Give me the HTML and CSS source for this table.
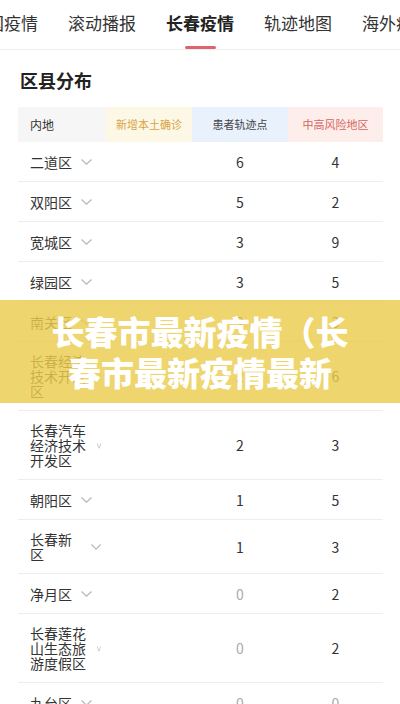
FILE: index.html
```html
<!DOCTYPE html>
<html lang="zh-CN">
<head>
<meta charset="utf-8">
<title>长春疫情</title>
<link rel="stylesheet" href="styles.css">
</head>
<body>
<div class="page">
  <nav class="tabs">
    <div class="tab-track">
      <span class="tab">全国疫情</span>
      <span class="tab">滚动播报</span>
      <span class="tab active">长春疫情</span>
      <span class="tab">轨迹地图</span>
      <span class="tab">海外疫情</span>
    </div>
  </nav>

  <section class="district">
    <h2 class="title">区县分布</h2>
    <div class="table">
      <div class="row head">
        <div class="cell name">内地</div>
        <div class="cell c-yellow">新增本土确诊</div>
        <div class="cell c-blue">患者轨迹点</div>
        <div class="cell c-pink">中高风险地区</div>
      </div>

      <div class="row">
        <div class="cell name"><span class="nm">二道区</span><svg class="chev" viewBox="0 0 10 6" preserveAspectRatio="none"><polyline points="0.5,0.5 5,5.2 9.5,0.5"/></svg></div>
        <div class="cell"></div><div class="cell">6</div><div class="cell">4</div>
      </div>
      <div class="row">
        <div class="cell name"><span class="nm">双阳区</span><svg class="chev" viewBox="0 0 10 6" preserveAspectRatio="none"><polyline points="0.5,0.5 5,5.2 9.5,0.5"/></svg></div>
        <div class="cell"></div><div class="cell">5</div><div class="cell">2</div>
      </div>
      <div class="row">
        <div class="cell name"><span class="nm">宽城区</span><svg class="chev" viewBox="0 0 10 6" preserveAspectRatio="none"><polyline points="0.5,0.5 5,5.2 9.5,0.5"/></svg></div>
        <div class="cell"></div><div class="cell">3</div><div class="cell">9</div>
      </div>
      <div class="row">
        <div class="cell name"><span class="nm">绿园区</span><svg class="chev" viewBox="0 0 10 6" preserveAspectRatio="none"><polyline points="0.5,0.5 5,5.2 9.5,0.5"/></svg></div>
        <div class="cell"></div><div class="cell">3</div><div class="cell">5</div>
      </div>
      <div class="row">
        <div class="cell name"><span class="nm">南关区</span><svg class="chev" viewBox="0 0 10 6" preserveAspectRatio="none"><polyline points="0.5,0.5 5,5.2 9.5,0.5"/></svg></div>
        <div class="cell"></div><div class="cell">2</div><div class="cell">3</div>
      </div>
      <div class="row">
        <div class="cell name"><span class="nm">长春经济技术开发区</span><svg class="chev" viewBox="0 0 10 6" preserveAspectRatio="none"><polyline points="0.5,0.5 5,5.2 9.5,0.5"/></svg></div>
        <div class="cell"></div><div class="cell">2</div><div class="cell">6</div>
      </div>
      <div class="row">
        <div class="cell name"><span class="nm">长春汽车经济技术开发区</span><svg class="chev" viewBox="0 0 10 6" preserveAspectRatio="none"><polyline points="0.5,0.5 5,5.2 9.5,0.5"/></svg></div>
        <div class="cell"></div><div class="cell">2</div><div class="cell">3</div>
      </div>
      <div class="row">
        <div class="cell name"><span class="nm">朝阳区</span><svg class="chev" viewBox="0 0 10 6" preserveAspectRatio="none"><polyline points="0.5,0.5 5,5.2 9.5,0.5"/></svg></div>
        <div class="cell"></div><div class="cell">1</div><div class="cell">5</div>
      </div>
      <div class="row">
        <div class="cell name"><span class="nm">长春新区</span><svg class="chev" viewBox="0 0 10 6" preserveAspectRatio="none"><polyline points="0.5,0.5 5,5.2 9.5,0.5"/></svg></div>
        <div class="cell"></div><div class="cell">1</div><div class="cell">3</div>
      </div>
      <div class="row">
        <div class="cell name"><span class="nm">净月区</span><svg class="chev" viewBox="0 0 10 6" preserveAspectRatio="none"><polyline points="0.5,0.5 5,5.2 9.5,0.5"/></svg></div>
        <div class="cell"></div><div class="cell zero">0</div><div class="cell">2</div>
      </div>
      <div class="row">
        <div class="cell name"><span class="nm">长春莲花山生态旅游度假区</span><svg class="chev" viewBox="0 0 10 6" preserveAspectRatio="none"><polyline points="0.5,0.5 5,5.2 9.5,0.5"/></svg></div>
        <div class="cell"></div><div class="cell zero">0</div><div class="cell">2</div>
      </div>
      <div class="row">
        <div class="cell name"><span class="nm">九台区</span><svg class="chev" viewBox="0 0 10 6" preserveAspectRatio="none"><polyline points="0.5,0.5 5,5.2 9.5,0.5"/></svg></div>
        <div class="cell"></div><div class="cell zero">0</div><div class="cell zero">0</div>
      </div>
    </div>
  </section>

  <div class="banner">
    <p class="banner-text">长春市最新疫情（长春市最新疫情最新</p>
  </div>
</div>
</body>
</html>
```

FILE: styles.css
```css
* { box-sizing: border-box; }

html, body {
  margin: 0;
  padding: 0;
  background: #fff;
}

body {
  font-family: "Noto Sans CJK SC", "Noto Sans", sans-serif;
  color: #333;
  overflow: hidden;
}

.page {
  position: relative;
  width: 400px;
  height: 704px;
  overflow: hidden;
}

/* tabs */
.tabs {
  height: 50px;
  border-bottom: 1px solid #eeeeee;
  overflow: hidden;
}

.tab-track {
  display: flex;
  gap: 30px;
  margin-left: -30px;
  white-space: nowrap;
}

.tab {
  position: relative;
  flex: none;
  height: 49px;
  padding-top: 12px;
  font-size: 17px;
  line-height: 22px;
  color: #333;
}

.tab.active {
  font-weight: 700;
  color: #222;
}

.tab.active::after {
  content: "";
  position: absolute;
  left: 50%;
  bottom: 0;
  width: 31px;
  height: 3px;
  margin-left: -15px;
  border-radius: 2px;
  background: #e0636b;
}

/* district */
.district {
  padding: 0 17px 0 18px;
}

.title {
  margin: 18px 0 15px 2px;
  font-size: 18px;
  line-height: 24px;
  font-weight: 700;
  color: #222;
}

.row {
  display: grid;
  grid-template-columns: 88px 86px 96px 95px;
  grid-auto-rows: minmax(39px, auto);
  border-bottom: 1px solid #eeeeee;
}

.row.head {
  grid-auto-rows: 35px;
  border-bottom: none;
}

.cell {
  display: flex;
  align-items: center;
  justify-content: center;
  padding: 12px 0 11px;
  font-size: 14px;
  line-height: 15px;
  color: #333;
}

.head .cell {
  padding: 0;
  font-size: 11px;
  line-height: 15px;
}

.head .name {
  background: #f6f6f6;
  font-size: 12px;
  color: #333;
}

.head .c-yellow {
  background: #fdf8e5;
  color: #d7a545;
}

.head .c-blue {
  background: #e9f1fd;
  color: #444;
}

.head .c-pink {
  background: #fdeeec;
  color: #d6655d;
}

.cell.name {
  justify-content: flex-start;
  gap: 9px;
  padding-left: 12px;
  padding-right: 5px;
}

.nm {
  flex: 0 1 auto;
  min-width: 0;
}

.chev {
  flex: 0 1 11px;
  width: 11px;
  min-width: 0;
  height: 6px;
  fill: none;
  stroke: #b8b8b8;
  stroke-width: 1.1;
}

.cell.zero {
  color: #aaaaaa;
}

/* banner overlay */
.banner {
  position: absolute;
  top: 300px;
  left: 0;
  right: 0;
  height: 103px;
  display: flex;
  align-items: center;
  justify-content: center;
  padding: 0 50px;
  background: rgba(236, 204, 78, 0.82);
}

.banner-text {
  margin: 0;
  font-size: 33px;
  line-height: 41px;
  font-weight: 900;
  color: #fff;
  text-align: center;
}
```
